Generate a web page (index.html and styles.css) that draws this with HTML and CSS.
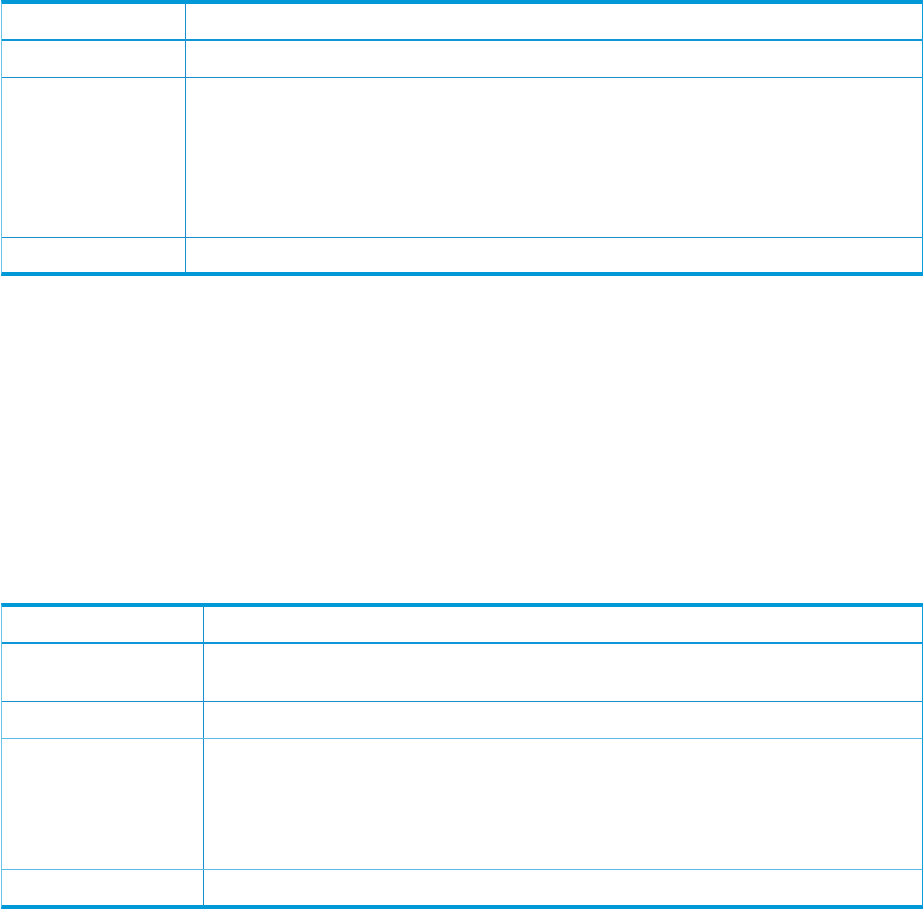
FILE: index.html
```html
<!DOCTYPE html>
<html lang="en">
<head>
    <meta charset="UTF-8">
    <meta name="viewport" content="width=device-width, initial-scale=1.0">
    <title>Tables</title>
    <link rel="stylesheet" href="styles.css">
</head>
<body>
    <div class="grid grid-first">
        <div class="row head h37"><div class="cell key"></div><div class="cell"></div></div>
        <div class="row h37"><div class="cell key"></div><div class="cell"></div></div>
        <div class="row h160"><div class="cell key"></div><div class="cell"></div></div>
        <div class="row last h34"><div class="cell key"></div><div class="cell"></div></div>
    </div>

    <div class="grid grid-second">
        <div class="row head h37"><div class="cell key"></div><div class="cell"></div></div>
        <div class="row h58"><div class="cell key"></div><div class="cell"></div></div>
        <div class="row light h37"><div class="cell key"></div><div class="cell"></div></div>
        <div class="row light h131"><div class="cell key"></div><div class="cell"></div></div>
        <div class="row last h35"><div class="cell key"></div><div class="cell"></div></div>
    </div>
</body>
</html>
```

FILE: styles.css
```css
* {
    box-sizing: border-box;
}
body {
    margin: 0;
    font-family: "Liberation Sans", Arial, sans-serif;
    background: white;
}
.grid {
    width: 922px;
    margin-left: 1px;
    border-top: 4px solid #0099d8;
    border-bottom: 4px solid #0099d8;
    border-left: 1px solid #6cc3ea;
    border-right: 1px solid #0e9ddc;
}
.grid-second {
    margin-top: 327px;
}
.row {
    display: flex;
    border-bottom: 1px solid #1a8fd0;
}
.row.head {
    border-bottom: 2px solid #0f96d6;
}
.row.light {
    border-bottom-color: #5dbbe8;
}
.row.last {
    border-bottom: none;
}
.cell {
    flex: 1;
}
.cell.key {
    flex: none;
    border-right: 1px solid #1a8fd0;
}
.grid-first .key { width: 184px; }
.grid-second .key { width: 202px; }

.h34 { height: 34px; }
.h35 { height: 35px; }
.h37 { height: 37px; }
.h58 { height: 58px; }
.h131 { height: 131px; }
.h160 { height: 160px; }
```
